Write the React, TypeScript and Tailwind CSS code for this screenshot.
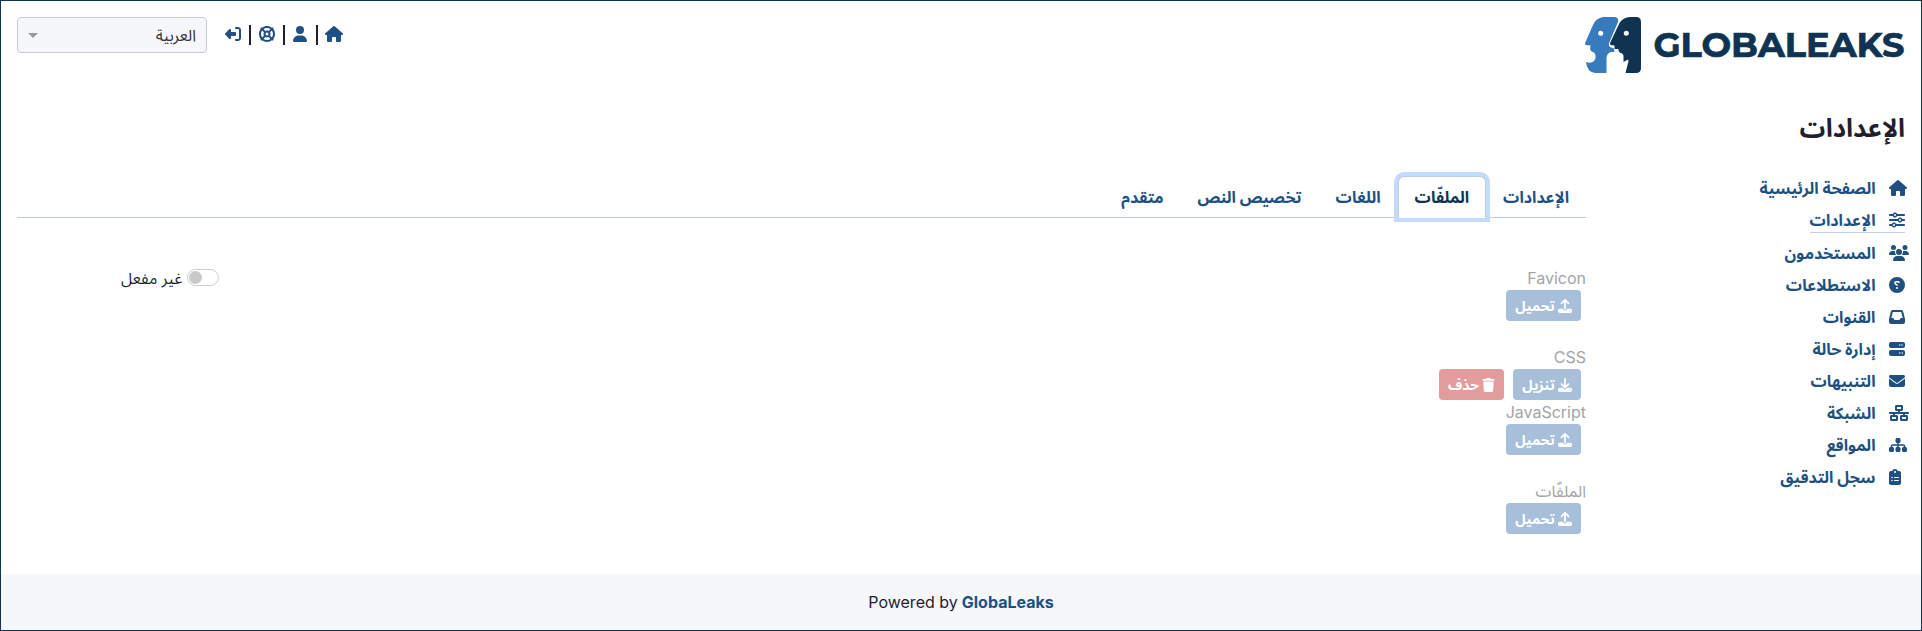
import React from "react";
import {
  FaHouse, FaSliders, FaUsers, FaCircleQuestion, FaInbox, FaServer, FaEnvelope, FaNetworkWired,
  FaSitemap, FaClipboardList, FaUser, FaLifeRing, FaRightFromBracket, FaUpload, FaDownload, FaTrash,
} from "react-icons/fa6";

const nav = [
  { label: "الصفحة الرئيسية", Icon: FaHouse, w: "w-[18px]" },
  { label: "الإعدادات", Icon: FaSliders, w: "w-4", active: true },
  { label: "المستخدمون", Icon: FaUsers, w: "w-5" },
  { label: "الاستطلاعات", Icon: FaCircleQuestion, w: "w-4 -scale-x-100" },
  { label: "القنوات", Icon: FaInbox, w: "w-4" },
  { label: "إدارة حالة", Icon: FaServer, w: "w-4" },
  { label: "التنبيهات", Icon: FaEnvelope, w: "w-4" },
  { label: "الشبكة", Icon: FaNetworkWired, w: "w-5" },
  { label: "المواقع", Icon: FaSitemap, w: "w-[18px]" },
  { label: "سجل التدقيق", Icon: FaClipboardList, w: "w-3" },
];

const tabs = ["الإعدادات", "الملفّات", "اللغات", "تخصيص النص", "متقدم"];

function Logo() {
  return (
    <svg className="h-14 w-[320px] overflow-visible" viewBox="0 0 320 56" direction="ltr">
      <path fill="#377bbc" d="M18 0H29Q34 0 33 5L24.500 25Q23 28 25 30L29 31.500L29.500 35H26Q22 36 21.500 41V56H10Q2 55 1 45Q6 47 9 44Q12 40 9.500 36L6 34L5 32L5.500 28.500L0.500 28Q-0.500 27.500 0.500 25L8 8Q11 1 18 0Z" />
      <path fill="#113352" d="M45 0H51Q56 0 56 5V51Q56 56 51 56H40.500L43.500 44L43 42.500L38.500 45V39Q38 36 35.500 36L33.500 34V32H29.500V28.500L25.500 28Q24.500 27 25.500 25L34.500 6Q38 0.500 45 0Z" />
      <circle cx="15.700" cy="16.300" r="2.500" fill="#fff" />
      <circle cx="41.300" cy="16.300" r="2.500" fill="#fff" />
      <text x="68.500" y="40" textLength="251" lengthAdjust="spacingAndGlyphs" fill="#113352" stroke="#113352" strokeWidth="0.7" fontFamily="Montserrat, Inter, sans-serif" fontWeight="700" fontSize="34.500">GLOBALEAKS</text>
    </svg>
  );
}

function Btn({ Icon, label, danger, w }: { Icon: React.ElementType; label: string; danger?: boolean; w: string }) {
  return (
    <button className={`flex h-[31px] items-center justify-center gap-[3px] rounded text-sm font-bold text-white ${w} ${danger ? "bg-[#e29c9c]" : "bg-[#a8bfd9]"}`}>
      <Icon className={danger ? "h-3.5 w-[13px]" : "h-3.5 w-3.5"} />
      <span>{label}</span>
    </button>
  );
}

function Label({ children }: { children: React.ReactNode }) {
  return <div className="h-6 leading-6 text-[#a4a4a8]">{children}</div>;
}

export default function App() {
  return (
    <div dir="rtl" className="flex h-[631px] w-full flex-col border border-[#113352] bg-white font-['Inter','Noto_Sans','Noto_Sans_Arabic',sans-serif] text-base text-[#1f1f2e]">
      <header className="flex h-[91px] items-start justify-between px-4 pt-4">
        <Logo />
        <div className="flex">
          <div className="ml-[18px] mt-[7px] flex h-5 items-center text-[#205081]">
            <FaHouse className="h-4 w-[18px]" />
            <span className="ml-[9px] mr-[7px] mt-0.5 h-5 w-[2px] bg-[#1f1f2e]" />
            <FaUser className="h-4 w-3.5" />
            <span className="ml-[8px] mr-[8px] mt-0.5 h-5 w-[2px] bg-[#1f1f2e]" />
            <FaLifeRing className="h-4 w-4" />
            <span className="mx-[8px] mt-0.5 h-5 w-[2px] bg-[#1f1f2e]" />
            <FaRightFromBracket className="h-4 w-4 -scale-x-100" />
          </div>
          <div className="flex h-9 w-[190px] items-center justify-between rounded border border-[#ccc] bg-[#f6f7fb] px-2.5 text-[#333]">
            <span>العربية</span>
            <span className="h-0 w-0 border-x-[5px] border-t-[5px] border-x-transparent border-t-[#999]" />
          </div>
        </div>
      </header>
      <h1 className="mr-4 flex h-[72px] items-center text-[25.6px] font-bold">الإعدادات</h1>
      <div className="flex h-[410px]">
        <nav className="flex w-[335px] flex-col items-start pr-4 pt-[8px] font-bold text-[#205081]">
          {nav.map(({ label, Icon, w, active }) => (
            <a key={label} className={`flex items-center gap-[13.5px] ${active ? "mb-1 h-[29px] border-b border-[#c4d0e0] pt-1" : "h-8"}`}>
              <span dir="ltr" className="flex w-4"><Icon className={`h-4 shrink-0 ${w}`} /></span>
              <span>{label}</span>
            </a>
          ))}
        </nav>
        <main className="flex flex-1 flex-col pl-4">
          <div className="mt-[11px] flex h-[43px] items-end border-b border-[#c0ccd8] font-bold text-[#205081]">
            {tabs.map((t) => (
              <a key={t} className={`-mb-px flex h-[42px] items-center px-4 ${t === "الملفّات" ? "rounded-t-md border border-[#c0ccd8] border-b-white bg-white text-[#113352] shadow-[0_0_0_4px_#c2dbfe]" : "border-x border-transparent"}`}>{t}</a>
            ))}
          </div>
          <div className="flex justify-between pt-12">
            <div>
              <Label>Favicon</Label>
              <div className="mr-[5px] flex"><Btn Icon={FaUpload} label="تحميل" w="w-[75px]" /></div>
              <div className="mt-6"><Label>CSS</Label></div>
              <div className="mr-[5px] flex gap-[9px]">
                <Btn Icon={FaDownload} label="تنزيل" w="w-[68px]" />
                <Btn Icon={FaTrash} label="حذف" danger w="w-[65px]" />
              </div>
              <Label>JavaScript</Label>
              <div className="mr-[5px] flex"><Btn Icon={FaUpload} label="تحميل" w="w-[75px]" /></div>
              <div className="mt-6"><Label>الملفّات</Label></div>
              <div className="mr-[5px] flex"><Btn Icon={FaUpload} label="تحميل" w="w-[75px]" /></div>
            </div>
            <div className="ml-[104px] flex h-6 items-center gap-[5px]">
              <span className="mb-0.5 flex h-[17px] w-8 items-center justify-end rounded-full border border-[#ccc] px-px">
                <span className="h-[13px] w-[13px] rounded-full bg-[#c8c8c8]" />
              </span>
              <span>غير مفعل</span>
            </div>
          </div>
        </main>
      </div>
      <footer dir="ltr" className="flex flex-1 items-center justify-center gap-1 bg-[#f6f7fb]">
        <span>Powered by</span>
        <span className="font-bold text-[#205081]">GlobaLeaks</span>
      </footer>
    </div>
  );
}
